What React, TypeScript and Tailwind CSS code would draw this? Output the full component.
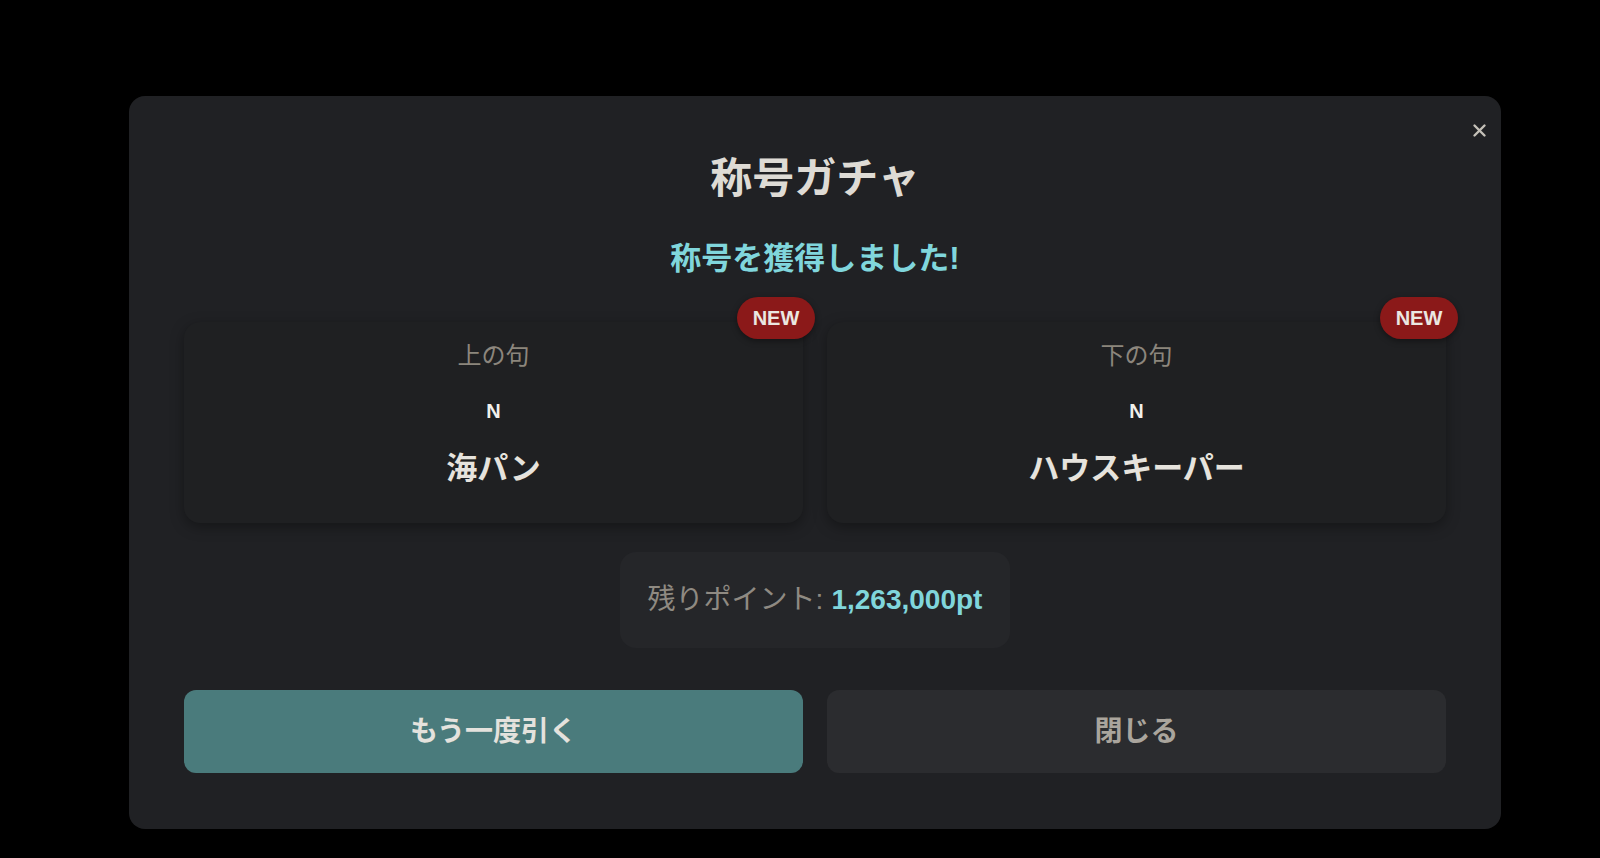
import React from 'react';

const font = { fontFamily: '"Liberation Sans", "Noto Sans CJK JP", sans-serif' };

interface TitleCardProps {
    label: string;
    rarity: string;
    name: string;
}

function TitleCard({ label, rarity, name }: TitleCardProps) {
    return (
        <div className="relative flex flex-col items-center rounded-2xl bg-[#1f2022] pt-4 pb-8 shadow-[0_4px_14px_rgba(0,0,0,0.35)]">
            {/* NEWバッジ */}
            <span className="absolute -top-[25px] -right-[12px] flex h-[42px] w-[78px] items-center justify-center rounded-full bg-[#8b1919] text-[20px] font-bold text-[#ebe7e1] shadow-[0_2px_6px_rgba(0,0,0,0.4)]">
                NEW
            </span>
            <p className="text-[24px] leading-[36px] text-[#8c867d]">{label}</p>
            <p className="mt-[23px] text-[20px] font-bold leading-[28px] text-[#f2f0ec]">{rarity}</p>
            <p className="mt-[22px] text-[31px] font-bold leading-[44px] text-[#e6e3dd]">{name}</p>
        </div>
    );
}

export default function App() {
    return (
        <div style={font} className="h-[858px] w-[1600px] overflow-hidden bg-black pl-[129px] pt-[96px]">
            <div className="relative flex w-[1372px] flex-col items-center rounded-2xl bg-[#202124] px-[55px] pt-[58px] pb-14">
                <button className="absolute top-[27px] right-[14px] flex h-[15px] w-[15px] items-center justify-center text-[#c4c0b8]">
                    <svg width="15" height="15" viewBox="0 0 15 15" fill="none">
                        <path d="M2.5 2.5L12.5 12.5M12.5 2.5L2.5 12.5" stroke="currentColor" strokeWidth="2.4" strokeLinecap="round" />
                    </svg>
                </button>

                <h2 className="text-[42px] font-bold leading-[50px] text-[#dedbd5]">称号ガチャ</h2>
                <p className="mt-[35px] text-[31px] font-bold leading-[40px] text-[#80d6dc]">称号を獲得しました!</p>

                <div className="mt-[43px] grid w-full grid-cols-2 gap-6">
                    <TitleCard label="上の句" rarity="N" name="海パン" />
                    <TitleCard label="下の句" rarity="N" name="ハウスキーパー" />
                </div>

                {/* 残りポイント */}
                <div className="mt-[29px] flex h-[96px] items-center rounded-2xl bg-[#252629] px-7 text-[28px] leading-[40px]">
                    <span className="text-[#8f8a82]">残りポイント: </span>
                    <span className="ml-[8px] font-bold text-[#80d6dc]">1,263,000pt</span>
                </div>

                <div className="mt-[42px] grid w-full grid-cols-2 gap-6">
                    <button className="flex h-[83px] items-center justify-center rounded-xl bg-[#4a7b7c] text-[28px] font-bold text-[#e4e2dd]">
                        もう一度引く
                    </button>
                    <button className="flex h-[83px] items-center justify-center rounded-xl bg-[#2b2c2f] text-[28px] font-bold text-[#aaa59d]">
                        閉じる
                    </button>
                </div>
            </div>
        </div>
    );
}
